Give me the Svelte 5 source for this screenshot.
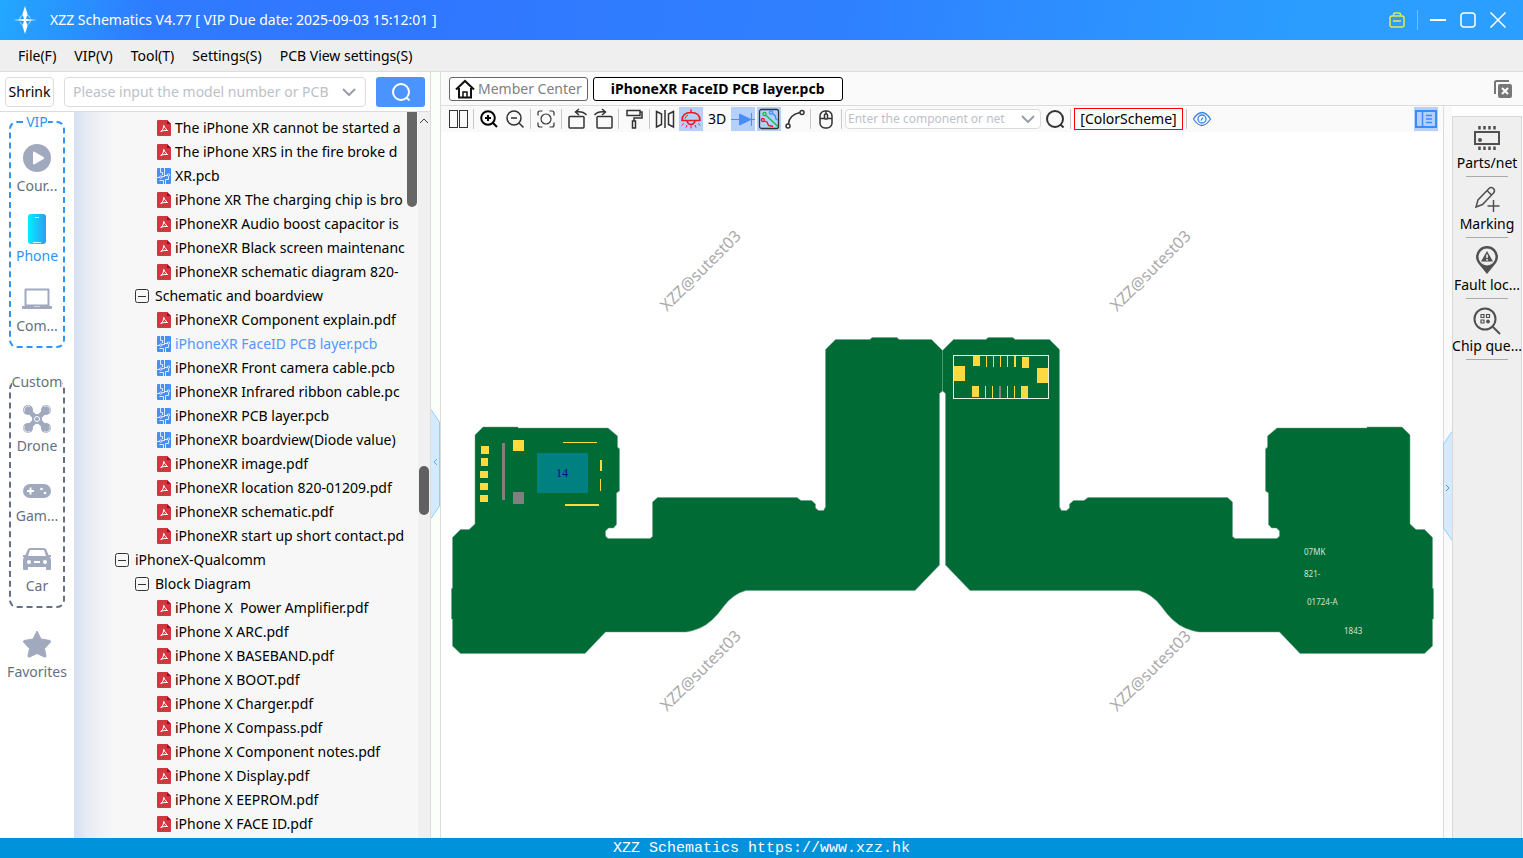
<script>
	const menus = ["File(F)", "VIP(V)", "Tool(T)", "Settings(S)", "PCB View settings(S)"];

	const vipItems = [
		{ label: "Cour...", icon: "course" },
		{ label: "Phone", icon: "phone", active: true },
		{ label: "Com...", icon: "computer" },
	];
	const customItems = [
		{ label: "Drone", icon: "drone" },
		{ label: "Gam...", icon: "game" },
		{ label: "Car", icon: "car" },
	];

	const tree = [
		{ type: "pdf", name: "The iPhone XR cannot be started a" },
		{ type: "pdf", name: "The iPhone XRS in the fire broke d" },
		{ type: "pcb", name: "XR.pcb" },
		{ type: "pdf", name: "iPhone XR The charging chip is bro" },
		{ type: "pdf", name: "iPhoneXR Audio boost capacitor is" },
		{ type: "pdf", name: "iPhoneXR Black screen maintenanc" },
		{ type: "pdf", name: "iPhoneXR schematic diagram 820-" },
		{ type: "dir", level: 2, name: "Schematic and boardview" },
		{ type: "pdf", name: "iPhoneXR Component explain.pdf" },
		{ type: "pcb", name: "iPhoneXR FaceID PCB layer.pcb" },
		{ type: "pcb", name: "iPhoneXR Front camera cable.pcb" },
		{ type: "pcb", name: "iPhoneXR Infrared ribbon cable.pc" },
		{ type: "pcb", name: "iPhoneXR PCB layer.pcb" },
		{ type: "pcb", name: "iPhoneXR boardview(Diode value)" },
		{ type: "pdf", name: "iPhoneXR image.pdf" },
		{ type: "pdf", name: "iPhoneXR location 820-01209.pdf" },
		{ type: "pdf", name: "iPhoneXR schematic.pdf" },
		{ type: "pdf", name: "iPhoneXR start up short contact.pd" },
		{ type: "dir", level: 1, name: "iPhoneX-Qualcomm" },
		{ type: "dir", level: 2, name: "Block Diagram" },
		{ type: "pdf", name: "iPhone X  Power Amplifier.pdf" },
		{ type: "pdf", name: "iPhone X ARC.pdf" },
		{ type: "pdf", name: "iPhone X BASEBAND.pdf" },
		{ type: "pdf", name: "iPhone X BOOT.pdf" },
		{ type: "pdf", name: "iPhone X Charger.pdf" },
		{ type: "pdf", name: "iPhone X Compass.pdf" },
		{ type: "pdf", name: "iPhone X Component notes.pdf" },
		{ type: "pdf", name: "iPhone X Display.pdf" },
		{ type: "pdf", name: "iPhone X EEPROM.pdf" },
		{ type: "pdf", name: "iPhone X FACE ID.pdf" },
	];
	let selected = $state("iPhoneXR FaceID PCB layer.pcb");

	let lamp = $state(true);
	let diode = $state(true);
	let routes = $state(true);

	const tools = [
		{ label: "Parts/net", icon: "parts" },
		{ label: "Marking", icon: "marking" },
		{ label: "Fault loc...", icon: "fault" },
		{ label: "Chip que...", icon: "chip" },
	];

	// left half of the flex, the right half is its mirror image
	const outline =
		"M475 435L483 427H518V428H608L617.5 436V447L619.5 449V491L616.5 493V524.5L613.5 528H608.5L605.5 531V536L608 538.5H650L652.5 536.5V502L657.5 497.5H797L801 500.5H811.5L815.5 504V508L818.5 510.5H823.5L825.5 507V349.5L835.5 339.5H870L872 337.5H897L899 339.5H931.5L942.5 350.5V391L939.5 393.5V565L915 590.5H746Q733 594 724 606Q712 623 700 628Q693 631 686 632H605.5L585 653.5H460.5L452.5 646V619H451.5V588.5H452.5V537.5L460.5 529.5H469L475 524Z";

	const gold = [
		[481, 446, 8, 8], [481, 458, 7, 8], [480, 471, 8, 7], [480, 483, 8, 7], [480, 495, 8, 7],
		[513, 440, 11, 11], [563, 442, 34, 1], [600, 460, 2, 11], [600, 479, 1, 12], [565, 504, 34, 2],
		[973, 356, 7, 10], [986, 356, 1, 11], [993, 356, 1, 11], [1000, 356, 1, 11], [1007, 356, 1, 11],
		[1014, 356, 2, 11], [1022, 357, 7, 11], [953, 366, 12, 15], [1037, 368, 11, 15],
		[972, 386, 7, 11], [985, 386, 1, 12], [992, 386, 1, 12], [1007, 386, 1, 12], [1014, 386, 1, 12],
		[1021, 386, 7, 12],
	];
	const gray = [[502, 443, 3, 57], [513, 492, 11, 12], [999, 386, 2, 12]];
	const marks = [[667, 312], [1117, 312], [667, 712], [1117, 712]];
</script>

{#snippet navIcon(name)}
	<svg width="32" height="32" viewBox="0 0 32 32" fill="#a0a9bd">
		{#if name == "course"}
			<circle cx="16" cy="16" r="14" />
			<path d="M12 10.500Q12 9 13.500 9.700L22.500 15Q24 16 22.500 17L13.500 22.300Q12 23 12 21.500Z" fill="#fff" />
		{:else if name == "phone"}
			<defs>
				<linearGradient id="phoneFill"><stop stop-color="#00f0ff" /><stop offset="1" stop-color="#2e9cf8" /></linearGradient>
			</defs>
			<rect x="7" y="2" width="18" height="30" rx="3" fill="url(#phoneFill)" />
			<path d="M14 5.500h4M12 30.500h8" stroke="#d9fbff" stroke-width="1" />
		{:else if name == "computer"}
			<path d="M4.500 7.500h23v16h-23Z" fill="none" stroke="#a0a9bd" stroke-width="2" stroke-linejoin="round" />
			<path d="M1 24h30v2q0 1-1 1H2q-1 0-1-1ZM13 24h6v1h-6Z" fill-rule="evenodd" />
		{:else if name == "drone"}
			<path d="M6 7L26 27M26 7L6 27" stroke="#a0a9bd" stroke-width="5" />
			<circle cx="7" cy="8" r="5" /><circle cx="25" cy="8" r="5" /><circle cx="7" cy="26" r="5" /><circle cx="25" cy="26" r="5" />
			<circle cx="16" cy="17" r="5" />
			<g fill="none" stroke="#e6e9ef" stroke-width="1">
				<path d="M3.500 9.500A4 4 0 0 1 9 4.500M23 4.500A4 4 0 0 1 28.500 10M3.500 24A4 4 0 0 0 9 29.500M28.500 24A4 4 0 0 1 23 29.500" />
				<circle cx="16" cy="17" r="2.500" stroke="#fff" />
			</g>
		{:else if name == "game"}
			<rect x="2" y="12" width="28" height="14" rx="7" />
			<path d="M6 19h7M9.500 15.500v7" stroke="#fff" stroke-width="2" />
			<circle cx="20.500" cy="17" r="1.300" fill="#fff" /><circle cx="24" cy="21" r="1.300" fill="#fff" />
		{:else if name == "car"}
			<path d="M7 7Q8 6 10 6H22Q24 6 25 7L27.500 13H30V15H28.500Q30 16 30 18V27Q30 28 29 28H26Q25 28 25 27V25H7V27Q7 28 6 28H3Q2 28 2 27V18Q2 16 3.500 15H2V13H4.500Z" />
			<path d="M9 8H23L25 14H7Z" fill="#fff" />
			<circle cx="8" cy="20" r="2" fill="#fff" /><circle cx="24" cy="20" r="2" fill="#fff" />
			<path d="M13 20h6" stroke="#fff" stroke-width="2" />
		{:else}
			<path d="M16 3L20 11L29 12.500Q30 13 29.500 14L23.500 20.500L25 28Q25 29.500 23.500 29L16 25.500L8.500 29Q7 29.500 7 28L8.500 20.500L2.500 14Q2 13 3 12.500L12 11Z" stroke="#a0a9bd" stroke-linejoin="round" />
		{/if}
	</svg>
{/snippet}

{#snippet navItem(item)}
	<button class="nav-item" class:active={item.active}>
		{@render navIcon(item.icon)}
		<span>{item.label}</span>
	</button>
{/snippet}

{#snippet magnifier(size, color)}
	<svg width={size} height={size} viewBox="0 0 20 20" fill="none" stroke={color} stroke-width="2">
		<circle cx="10" cy="10" r="8" /><path d="M15.500 15.500L18.500 18.500" />
	</svg>
{/snippet}

{#snippet chevron()}
	<svg width="14" height="8" viewBox="0 0 14 8" fill="none" stroke="#999fa8" stroke-width="2"><path d="M1 1L7 7L13 1" /></svg>
{/snippet}

<div class="app">
	<header>
		<svg class="logo" width="24" height="28" viewBox="0 0 24 28" fill="#fff">
			<circle cx="12" cy="14" r="5.500" fill="none" stroke="#b9dcff" stroke-dasharray="6 2.600" />
			<path d="M12 0L14.500 8L13 13L24 14L13 15L14.500 20L12 28L9.500 20L11 15L0 14L11 13L9.500 8Z" />
		</svg>
		<h1>XZZ Schematics V4.77 [ VIP Due date: 2025-09-03 15:12:01 ]</h1>
		<div class="window-buttons">
			<button aria-label="Account">
				<svg width="16" height="16" viewBox="0 0 16 16" fill="none" stroke="#e6e843" stroke-width="1.500"><rect x="1" y="4" width="14" height="11" rx="2" /><path d="M4.500 4V2.500Q4.500 1 6 1H10Q11.500 1 11.500 2.500V4M4 9H12" /></svg>
			</button>
			<i></i>
			<button aria-label="Minimize">
				<svg width="16" height="16" viewBox="0 0 16 16" stroke="#fff" stroke-width="2"><path d="M0 8H16" /></svg>
			</button>
			<button aria-label="Maximize">
				<svg width="16" height="16" viewBox="0 0 16 16" fill="none" stroke="#fff" stroke-width="1.500"><rect x="1" y="1" width="14" height="14" rx="3" /></svg>
			</button>
			<button aria-label="Close">
				<svg width="16" height="16" viewBox="0 0 16 16" stroke="#fff" stroke-width="1.500"><path d="M0.500 0.500L15.500 15.500M15.500 0.500L0.500 15.500" /></svg>
			</button>
		</div>
	</header>

	<nav class="menu">
		{#each menus as menu}
			<button>{menu}</button>
		{/each}
	</nav>

	<div class="body">
		<aside class="left">
			<form class="search" onsubmit={(e) => e.preventDefault()}>
				<button type="button" class="shrink">Shrink</button>
				<div class="combo">
					<input aria-label="Model number or PCB" placeholder="Please input the model number or PCB" />
					<button type="button" aria-label="Search history">{@render chevron()}</button>
				</div>
				<button class="go" aria-label="Search">{@render magnifier(20, "#fff")}</button>
			</form>
			<div class="browser">
				<div class="categories">
					<fieldset class="vip">
						<legend>VIP</legend>
						{#each vipItems as item}
							{@render navItem(item)}
						{/each}
					</fieldset>
					<fieldset>
						<legend>Custom</legend>
						{#each customItems as item}
							{@render navItem(item)}
						{/each}
					</fieldset>
					{@render navItem({ label: "Favorites", icon: "star" })}
				</div>
				<div class="tree">
					<ul>
						{#each tree as row}
							<li class={row.type} class:top={row.level == 1}>
								<button class:selected={row.name == selected} onclick={() => (selected = row.name)}>
									{#if row.type == "dir"}
										<svg width="14" height="14" viewBox="0 0 14 14" fill="none" stroke="#333"><rect x="0.500" y="0.500" width="13" height="13" rx="2" /><path d="M3 7.500H11" /></svg>
									{:else if row.type == "pdf"}
										<svg width="14" height="16" viewBox="0 0 14 16">
											<path d="M1 0H10L14 4V15Q14 16 13 16H1Q0 16 0 15V1Q0 0 1 0Z" fill="#d2373f" />
											<path d="M10 0L14 4H10Z" fill="#8e1119" />
											<path d="M6.500 5Q7.500 8 10.500 10.500M6.800 5.500Q7 9 3.500 12M4 11.500Q6.500 9.800 10.500 10.500" fill="none" stroke="#fff" />
										</svg>
									{:else}
										<svg width="14" height="16" viewBox="0 0 14 16" fill="none" stroke="#fff">
											<rect width="14" height="16" rx="1" fill="#4a8df8" stroke="none" />
											<path d="M3.500 0V4.500H5.500V7M7.500 0V8.500H5M10.500 7.500H7.500M0 9.500H2.500M6.500 16V12.500H2.500M8.500 16V11.500H11.500V8.500" stroke-width="0.800" />
											<circle cx="11.500" cy="7" r="1.200" stroke-width="0.800" /><circle cx="3.800" cy="9" r="1.200" stroke-width="0.800" />
										</svg>
									{/if}
									<span>{row.name}</span>
								</button>
							</li>
						{/each}
					</ul>
					<div class="inner-bar"><i></i></div>
					<div class="outer-bar">
						<svg width="10" height="6" viewBox="0 0 10 6" fill="none" stroke="#444"><path d="M1 5L5 1L9 5" /></svg>
						<i></i>
					</div>
				</div>
			</div>
		</aside>

		<button class="gutter" aria-label="Collapse file list">
			<svg width="9" height="110" viewBox="0 0 9 110" fill="#d6eaff" stroke="#94cffa">
				<path d="M0 0.500L8.500 13V97L0 109.500" /><path d="M6 50L3 53L6 56" fill="none" stroke="#5aaef0" />
			</svg>
		</button>

		<div class="right">
			<div class="tabs">
				<button class="tab">
					<svg width="20" height="20" viewBox="0 0 20 20" fill="none" stroke="#111" stroke-width="2"><path d="M1 10.500L10 2L19 10.500M4 9V18.500H16V9" /><path d="M8 18V13H12V18" stroke-width="1.500" /></svg>
					Member Center
				</button>
				<button class="tab current">iPhoneXR FaceID PCB layer.pcb</button>
				<button class="close-all" aria-label="Close all tabs">
					<svg width="18" height="18" viewBox="0 0 18 18"><path d="M1 14V2.500Q1 1 2.500 1H15" fill="none" stroke="#777" stroke-width="2" /><rect x="4" y="4" width="14" height="14" rx="2" fill="#777" /><path d="M8 8L14 14M14 8L8 14" stroke="#fff" stroke-width="2" /></svg>
				</button>
			</div>

			<div class="workspace">
				<main>
					<div class="toolbar">
						<button aria-label="Split view"><svg viewBox="0 0 24 24" stroke-width="1"><rect x="3.500" y="3.500" width="8" height="17" /><rect x="13.500" y="3.500" width="8" height="17" /></svg></button>
						<i></i>
						<button aria-label="Zoom in"><svg viewBox="0 0 24 24" stroke="#000" stroke-width="2"><circle cx="11" cy="11" r="6.800" /><path d="M16 16L20 20M8 11H14M11 8V14" /></svg></button>
						<button aria-label="Zoom out"><svg viewBox="0 0 24 24"><circle cx="11" cy="11" r="7" /><path d="M16 16L20.500 20.500M8 11H14" /></svg></button>
						<i></i>
						<button aria-label="Fit"><svg viewBox="0 0 24 24" stroke-width="1.200"><circle cx="12" cy="12" r="5" /><path d="M4 8.500V6Q4 4 6 4H8.500M15.500 4H18Q20 4 20 6V8.500M20 15.500V18Q20 20 18 20H15.500M8.500 20H6Q4 20 4 18V15.500" /></svg></button>
						<i></i>
						<button aria-label="Rotate left"><svg viewBox="0 0 24 24"><rect x="4" y="9.500" width="15" height="11.500" rx="1" /><path d="M21.500 8Q18 4 11 5M14 2L10.500 5L14 8" /></svg></button>
						<button aria-label="Rotate right"><svg viewBox="0 0 24 24"><rect x="6" y="9.500" width="15" height="11.500" rx="1" /><path d="M3.500 8Q7 4 14 5M11 2L14.500 5L11 8" /></svg></button>
						<i></i>
						<button aria-label="Paint"><svg viewBox="0 0 24 24"><path d="M5 3.500H18V8.500H5ZM18 5H20V11H12V14M10.500 14H13.500V21H10.500Z" /></svg></button>
						<i></i>
						<button aria-label="Mirror"><svg viewBox="0 0 24 24"><path d="M12 3V21M3.500 4.500L8.500 7V17.500L3.500 20ZM20.500 4.500L15.500 7V17.500L20.500 20Z" /></svg></button>
						<button aria-label="Lamp" class:on={lamp} onclick={() => (lamp = !lamp)}><svg viewBox="0 0 24 24" stroke="#f5141e"><path d="M3 13.500Q3 5.500 12 5.500Q21 5.500 21 13.500ZM12 2.500V6M8 14Q9 17.500 12 17.500Q15 17.500 16 14" /><path d="M4.500 16.500L3 18.500M8 18L7 20.500M12 18.500V21.500M16 18L17 20.500M19.500 16.500L21 18.500M6 11.500Q6.500 9 9 8" stroke-width="1" /></svg></button>
						<button class="text">3D</button>
						<button aria-label="Diode" class:on={diode} onclick={() => (diode = !diode)}><svg viewBox="0 0 24 24" stroke="#4a8df8" stroke-width="1"><path d="M0 12.500H24M20.500 6V19" /><path d="M8.500 7V18L20 12.500Z" fill="#4a8df8" /></svg></button>
						<button aria-label="Routes" class:on={routes} onclick={() => (routes = !routes)}><svg viewBox="0 0 24 24" stroke-width="1.300"><rect x="2.500" y="2.500" width="19" height="19" rx="2" stroke="#333" /><g stroke="#12b848"><circle cx="7.500" cy="7" r="1.600" /><path d="M8.800 8.300L21 19.500" /></g><g stroke="#f5141e"><circle cx="5.800" cy="13" r="1.500" /><path d="M7 14L10 15L11.500 18.500L16 19.500" /></g><g stroke="#3690fa"><circle cx="14" cy="5.500" r="1.600" /><path d="M15.500 6.500L18 8.500L19 12L20.500 13" /></g></svg></button>
						<button aria-label="Curve"><svg viewBox="0 0 24 24"><circle cx="5" cy="19" r="2" /><circle cx="19" cy="5.500" r="2" /><path d="M5.500 17Q6 8 17 5.500" /></svg></button>
						<i></i>
						<button aria-label="Mouse"><svg viewBox="0 0 24 24"><rect x="6" y="4" width="12" height="17" rx="5" /><path d="M6 11.500H18M12 4V7" /><rect x="10.500" y="7" width="3" height="5" rx="1" fill="#fafafa" /></svg></button>
						<i></i>
						<div class="combo small">
							<input aria-label="Component or net name" placeholder="Enter the component or net" />
							<button aria-label="Component history">{@render chevron()}</button>
						</div>
						<button aria-label="Find">{@render magnifier(20, "#333")}</button>
						<i></i>
						<button class="scheme">[ColorScheme]</button>
						<i></i>
						<button aria-label="Visibility"><svg viewBox="0 0 24 24" stroke="#3c82e4" stroke-width="1.300"><path d="M3.500 12Q12 -1 20.500 12Q12 25 3.500 12Z" /><circle cx="12" cy="12" r="4" /><path d="M11 13.500L13 10.500" /></svg></button>
						<button class="panel-toggle on" aria-label="Side panel"><svg viewBox="0 0 24 24" stroke="#3c8cf8"><rect x="2" y="4" width="20" height="16" stroke-width="2" /><path d="M8.500 4V20M12 8.500H18M12 12H18M12 15.500H18" /></svg></button>
					</div>
					<svg class="board" viewBox="441 132 1002 706">
						<g class="copper">
							<path d={outline} />
							<path d={outline} transform="matrix(-1 0 0 1 1885 0)" />
						</g>
						<rect x="537" y="453" width="51" height="40" fill="#008080" />
						{#each gray as [x, y, w, h]}
							<rect {x} {y} width={w} height={h} fill="#808080" />
						{/each}
						{#each gold as [x, y, w, h]}
							<rect {x} {y} width={w} height={h} fill="#ffd940" />
						{/each}
						<rect x="953.500" y="355.500" width="95" height="43" fill="none" stroke="#e8f0e8" />
						<text class="pin" x="556" y="477">14</text>
						<g class="silk">
							<text x="1304" y="555">07MK</text>
							<text x="1304" y="577">821-</text>
							<text x="1307" y="605">01724-A</text>
							<text x="1344" y="634">1843</text>
						</g>
						<g class="watermark">
							{#each marks as [x, y]}
								<text transform="translate({x} {y}) rotate(-45)">XZZ@sutest03</text>
							{/each}
						</g>
					</svg>
				</main>
				<button class="gutter side" aria-label="Collapse tools">
					<svg width="9" height="110" viewBox="0 0 9 110" fill="#d6eaff" stroke="#94cffa">
						<path d="M9 0.500L0.500 13V97L9 109.500" /><path d="M3 54L6 57L3 60" fill="none" stroke="#3c9cf0" />
					</svg>
				</button>
				<aside class="tools">
					{#each tools as tool}
						<button>
							<svg width="28" height="28" viewBox="0 0 28 28" fill="none" stroke="#505050" stroke-width="2">
								{#if tool.icon == "parts"}
									<rect x="2" y="8" width="24" height="12" /><path d="M6.500 2V5.500M11.500 2V5.500M16.500 2V5.500M21.500 2V5.500M6.500 22.500V26M11.500 22.500V26M16.500 22.500V26M21.500 22.500V26" stroke-width="2.500" /><circle cx="7" cy="16" r="1" fill="#505050" />
								{:else if tool.icon == "marking"}
									<path d="M3 22L5 15L16 3.500Q18 1.500 20.500 3.500Q22.500 6 20.500 8L9.500 19.500ZM14 5.500L18.500 10M20.500 15V27M14.500 21H26.500" stroke-width="1.500" />
								{:else if tool.icon == "fault"}
									<path d="M14 28L5 17Q3 14 3 11A11 11 0 0 1 25 11Q25 14 23 17Z" fill="#505050" stroke="none" /><circle cx="14" cy="11" r="8.500" fill="#efefef" stroke="none" /><path d="M14 5L20 15.500H8Z" fill="#505050" stroke="none" /><path d="M14 8.500V12M14 13V14.500" stroke="#fff" stroke-width="1.500" />
								{:else}
									<circle cx="12" cy="12" r="10.500" /><path d="M19.500 19.500L27 27" /><path d="M8 7.500H11V10.500H8ZM13.500 7.500H16.500V10.500H13.500ZM8 13H11V16H8Z" stroke-width="1.200" /><circle cx="15" cy="14.500" r="1.500" fill="#505050" stroke-width="1" />
								{/if}
							</svg>
							<span>{tool.label}</span>
						</button>
					{/each}
				</aside>
			</div>
		</div>
	</div>

	<footer>XZZ Schematics https://www.xzz.hk</footer>
</div>

<style>
	:global(body) {
		margin: 0;
	}
	.app {
		display: flex;
		flex-direction: column;
		height: 100vh;
		overflow: hidden;
		background: #fff;
		color: #000;
		font: 14px/24px "Noto Sans", "Open Sans", sans-serif;
	}
	button,
	input {
		box-sizing: border-box;
		margin: 0;
		padding: 0;
		border: 0;
		background: none;
		color: inherit;
		font: inherit;
	}
	svg {
		display: block;
		flex: none;
	}
	header {
		display: flex;
		align-items: center;
		height: 40px;
		padding: 0 17px 0 13px;
		background: linear-gradient(100deg, #22a8ff 0, #2f7bff 10%, #3076ff 25%, #2f80ff 55%, #2b9dff 85%, #2b9fff 100%);
		color: #fff;
	}
	h1 {
		margin: 0 0 0 13px;
		font-size: 14px;
		font-weight: 400;
	}
	.window-buttons {
		display: flex;
		align-items: center;
		gap: 14px;
		margin-left: auto;
	}
	.window-buttons i {
		width: 1px;
		height: 20px;
		margin: 0 -2px;
		background: #78bcff;
	}
	.menu {
		display: flex;
		gap: 18px;
		height: 30px;
		padding: 1px 0 0 18px;
		background: #efefef;
		border-bottom: 1px solid #dcdcdc;
	}
	.body {
		display: flex;
		flex: 1;
		min-height: 0;
	}
	.left {
		display: flex;
		flex-direction: column;
		flex: 0 0 430px;
		min-width: 0;
		border-right: 1px solid #dcdcdc;
	}
	.search {
		display: flex;
		align-items: center;
		height: 39px;
		padding: 0 5px;
		border-bottom: 1px solid #dcdcdc;
	}
	.shrink {
		width: 49px;
		height: 30px;
		border: 1px solid #dcdcdc;
		border-radius: 4px;
	}
	.combo {
		display: flex;
		align-items: center;
		flex: 1;
		box-sizing: border-box;
		min-width: 0;
		height: 30px;
		margin: 0 10px;
		padding: 0 9px 0 8px;
		border: 1px solid #dcdcdc;
		border-radius: 4px;
		background: #fff;
	}
	.combo input {
		flex: 1;
		min-width: 0;
		margin-right: 7px;
		outline: 0;
	}
	.combo input::placeholder {
		color: #bcc1c9;
		opacity: 1;
	}
	.go {
		display: grid;
		place-items: center;
		width: 49px;
		height: 30px;
		border-radius: 3px;
		background: #4b93ff;
	}
	.browser {
		display: flex;
		flex: 1;
		min-height: 0;
	}
	.categories {
		box-sizing: border-box;
		flex: 0 0 74px;
		color: #666f80;
	}
	fieldset {
		min-width: 0;
		margin: 0 9px 24px;
		padding: 10px 0 8px;
		border: 2px dashed #667085;
		border-radius: 8px;
	}
	fieldset:nth-of-type(2) {
		margin-bottom: 20px;
	}
	fieldset.vip {
		border-color: #2d95f5;
	}
	legend {
		margin: 0 auto;
		padding: 0;
		line-height: 20px;
	}
	.vip legend,
	.nav-item.active {
		color: #2d95f5;
	}
	.nav-item {
		display: flex;
		flex-direction: column;
		align-items: center;
		width: 100%;
	}
	.nav-item + .nav-item {
		margin-top: 14px;
	}
	.tree {
		display: flex;
		flex: 1;
		min-width: 0;
		background: linear-gradient(90deg, #d5e0f2 0, #e6eaf3 12px, #f7f7f7 40px);
	}
	ul {
		flex: 1;
		min-width: 0;
		margin: 0;
		padding: 4px 0 0;
		overflow: hidden;
		list-style: none;
	}
	li {
		padding-left: 83px;
		overflow: hidden;
	}
	li.dir {
		padding-left: 61px;
	}
	li.top {
		padding-left: 41px;
	}
	li button {
		display: flex;
		align-items: center;
		gap: 4px;
		height: 24px;
		white-space: pre;
	}
	li.dir button {
		gap: 6px;
	}
	li .selected {
		color: #5296ff;
	}
	.inner-bar {
		flex: none;
		width: 10px;
		padding: 0 1px;
	}
	.inner-bar i {
		display: block;
		height: 95px;
		border-radius: 0 0 5px 5px;
		background: #666;
	}
	.outer-bar {
		flex: none;
		width: 12px;
		background: #f0f0f0;
	}
	.outer-bar svg {
		margin: 6px 1px 342px;
	}
	.outer-bar i {
		display: block;
		height: 49px;
		margin: 0 1px;
		border-radius: 5px;
		background: #606060;
	}
	.gutter {
		display: flex;
		align-items: center;
		flex: 0 0 10px;
		padding-top: 18px;
		border-right: 1px solid #dcdcdc;
		background: #fafffa;
	}
	.gutter.side {
		flex-basis: 9px;
		padding-top: 28px;
		border: 0;
		background: linear-gradient(90deg, #dcdcdc 1px, #fafafa 1px);
	}
	.right {
		display: flex;
		flex-direction: column;
		flex: 1;
		min-width: 0;
	}
	.tabs {
		display: flex;
		align-items: center;
		gap: 5px;
		height: 33px;
		padding: 0 11px 0 8px;
		border-bottom: 1px solid #dcdcdc;
		background: #fafafa;
	}
	.tab {
		display: flex;
		align-items: center;
		gap: 3px;
		height: 24px;
		padding: 0 5px;
		border: 1px solid #666;
		border-radius: 3px;
		background: #fff;
		color: #808080;
	}
	.current {
		padding: 0 17px;
		border-color: #000;
		color: #000;
		font-weight: 700;
	}
	.close-all {
		margin-left: auto;
	}
	.workspace {
		display: flex;
		flex: 1;
		min-height: 0;
	}
	main {
		display: flex;
		flex-direction: column;
		flex: 1;
		min-width: 0;
	}
	.toolbar {
		display: flex;
		align-items: center;
		gap: 2px;
		height: 26px;
		padding: 0 5px;
		background: #fafafa;
	}
	.toolbar > button {
		display: grid;
		place-items: center;
		flex: none;
		width: 24px;
		height: 24px;
	}
	.toolbar > button > svg {
		fill: none;
	}
	.toolbar > button > svg[viewBox="0 0 24 24"] {
		width: 24px;
		height: 24px;
	}
	.toolbar > button > svg:not([stroke]) {
		stroke: #333;
	}
	.toolbar > button > svg:not([stroke-width]) {
		stroke-width: 1.5;
	}
	.toolbar > i {
		width: 1px;
		height: 20px;
		margin: 0 1px;
		background: #c8c8c8;
	}
	.toolbar > .on {
		background: #b5d0fc;
	}
	.toolbar > .scheme {
		width: 109px;
		height: 22px;
		border: 1px solid #f00;
		line-height: 20px;
	}
	.toolbar > .panel-toggle {
		margin-left: auto;
	}
	.small {
		flex: 0 0 196px;
		height: 20px;
		margin: 0;
		padding: 0 5px 0 2px;
		font-size: 12px;
	}
	.board {
		flex: 1;
		width: 100%;
		min-height: 0;
	}
	.copper {
		fill: #006b35;
		stroke: #69a486;
		stroke-width: 0.5;
	}
	.pin {
		fill: #0000a0;
		font: 12px "Liberation Serif", serif;
	}
	.silk {
		fill: #d5e2cf;
		font-size: 8px;
	}
	.watermark {
		fill: #aaa;
		font-size: 16px;
	}
	.tools {
		box-sizing: border-box;
		flex: 0 0 70px;
		min-width: 0;
		margin: 10px 1px 0 0;
		border: 1px solid #d8d8d8;
		border-bottom: 0;
		background: #efefef;
	}
	.tools button {
		display: flex;
		flex-direction: column;
		align-items: center;
		width: 100%;
		height: 61px;
		padding-top: 7px;
		white-space: nowrap;
	}
	.tools span {
		line-height: 22px;
	}
	.tools button::after {
		content: "";
		width: 42px;
		height: 1px;
		margin-top: 2px;
		background: #aaa;
	}
	footer {
		height: 20px;
		background: #0092db;
		color: #fff;
		font: 15px/22px "Liberation Mono", monospace;
		text-align: center;
	}
</style>
